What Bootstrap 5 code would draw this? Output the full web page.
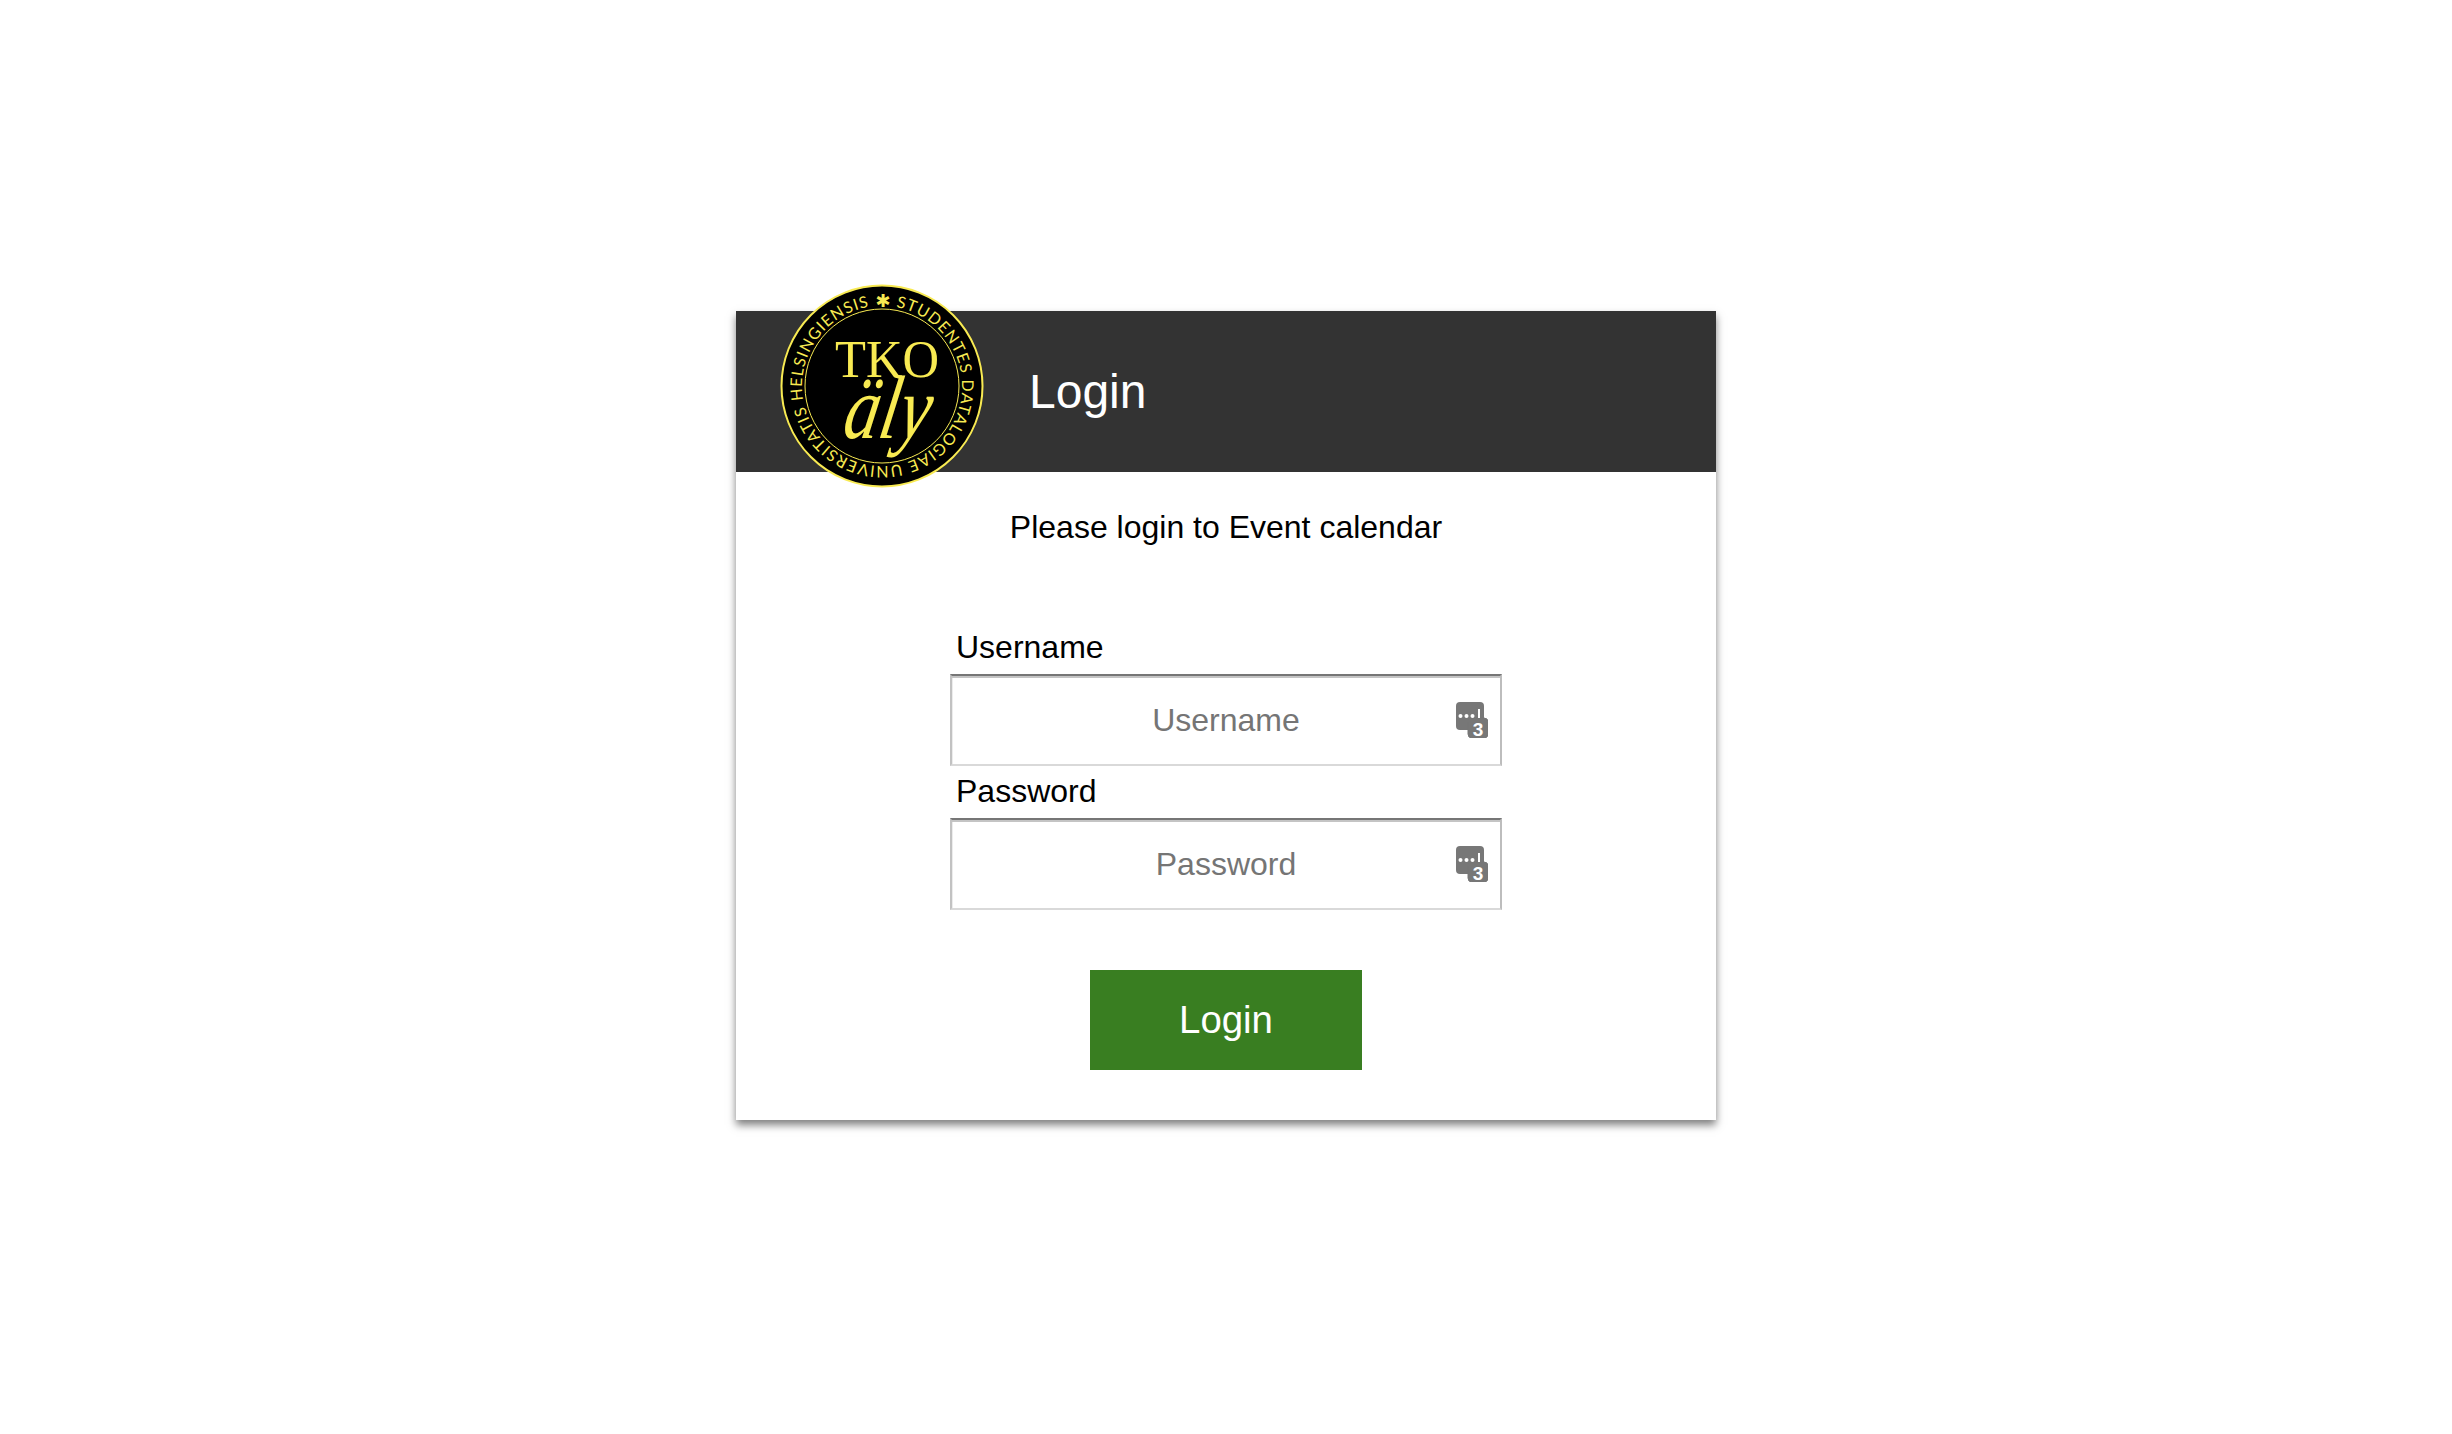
<!DOCTYPE html>
<html lang="en">
<head>
    <meta charset="UTF-8">
    <meta name="viewport" content="width=device-width, initial-scale=1.0">
    <title>Login</title>
    <link href="https://cdn.jsdelivr.net/npm/bootstrap@5.3.0/dist/css/bootstrap.min.css" rel="stylesheet">
    <style>
        body {
            font-family: "Liberation Sans", Arial, sans-serif;
            color: #000;
            background: #fff;
        }
        .login-page {
            padding-bottom: 3px;
        }
        .login-box {
            position: relative;
            width: 980px;
            height: 809px;
            background: #fff;
            box-shadow: 0 5px 8px rgba(0,0,0,0.5);
        }
        .login-head {
            height: 161px;
            padding-left: 293px;
            background: #333;
            color: #fff;
            font-size: 48px;
        }
        .login-logo {
            position: absolute;
            left: 44px;
            top: -27px;
            width: 204px;
            height: 204px;
        }
        .login-intro {
            margin: 36px 0 0;
            height: 38px;
            font-size: 32px;
            line-height: 38px;
        }
        .login-form {
            width: 552px;
            margin: 76px auto 0;
        }
        .login-label {
            display: block;
            margin: 0;
            padding-left: 6px;
            height: 52px;
            font-size: 32px;
            line-height: 50px;
        }
        .login-field {
            position: relative;
        }
        .login-field .form-control {
            height: 92px;
            padding: 0 60px;
            border-radius: 0;
            border-width: 2px;
            border-style: solid;
            border-color: #767676 #bdbdbd #d9d9d9 #c2c2c2;
            box-shadow: inset 0 2px 0 #c4c4c4, inset 1px 0 0 #ececec;
            font-size: 32px;
            text-align: center;
            color: #000;
        }
        .login-field .form-control::placeholder {
            color: #757575;
            opacity: 1;
        }
        .field-icon {
            position: absolute;
            right: 14px;
            top: 28px;
            width: 32px;
            height: 36px;
        }
        .login-btn {
            display: block;
            width: 272px;
            height: 100px;
            margin: 60px auto 0;
            padding: 0;
            border: 0;
            border-radius: 0;
            background: #397e21;
            color: #fff;
            font-size: 38.4px;
        }
        .login-btn:hover {
            background: #397e21;
            color: #fff;
        }
    </style>
</head>
<body>
    <div class="login-page d-flex align-items-center justify-content-center min-vh-100">
        <div class="login-box">
            <div class="login-head d-flex align-items-center">Login</div>
            <svg class="login-logo" viewBox="-102 -102 204 204" role="img" aria-label="TKO-äly">
                <defs>
                    <path id="ringPath" d="M 0 -80 A 80 80 0 1 1 -0.01 -80"></path>
                </defs>
                <circle r="100.5" fill="#000" stroke="#f8ea52" stroke-width="2"></circle>
                <circle r="77" fill="none" stroke="#f8ea52" stroke-width="1"></circle>
                <text font-family="Lato, sans-serif" font-size="16" fill="#f8ea52">
                    <textPath href="#ringPath" startOffset="14" textLength="475">STUDENTES DATALOGIAE UNIVERSITATIS HELSINGIENSIS</textPath>
                </text>
                <text x="1" y="-79" font-family="'DejaVu Sans', sans-serif" font-size="18" fill="#f8ea52" text-anchor="middle">✱</text>
                <text x="-47" y="-9" font-family="'Liberation Serif', serif" font-size="53" fill="#f8ea52" textLength="104" lengthAdjust="spacingAndGlyphs">TKO</text>
                <text transform="translate(-41 52) skewX(-10)" font-family="'Liberation Serif', serif" font-style="italic" font-size="90" fill="#f8ea52" textLength="86" lengthAdjust="spacingAndGlyphs">äly</text>
            </svg>
            <p class="login-intro text-center">Please login to Event calendar</p>
            <form class="login-form">
                <label class="login-label" for="username">Username</label>
                <div class="login-field">
                    <input type="text" class="form-control" id="username" placeholder="Username">
                    <svg class="field-icon" viewBox="0 0 32 36" aria-hidden="true">
                        <rect x="0" y="0" width="28" height="28" rx="4" fill="#777"></rect>
                        <rect x="12" y="16" width="20" height="20" rx="4" fill="#777" stroke="#777"></rect>
                        <circle cx="4.5" cy="14" r="2" fill="#fff"></circle>
                        <circle cx="10.5" cy="14" r="2" fill="#fff"></circle>
                        <circle cx="16.5" cy="14" r="2" fill="#fff"></circle>
                        <rect x="22" y="7" width="2" height="9" fill="#fff"></rect>
                        <text x="22" y="33.5" font-family="'Liberation Sans', sans-serif" font-weight="700" font-size="19" fill="#fff" text-anchor="middle">3</text>
                    </svg>
                </div>
                <label class="login-label" for="password">Password</label>
                <div class="login-field">
                    <input type="password" class="form-control" id="password" placeholder="Password">
                    <svg class="field-icon" viewBox="0 0 32 36" aria-hidden="true">
                        <rect x="0" y="0" width="28" height="28" rx="4" fill="#777"></rect>
                        <rect x="12" y="16" width="20" height="20" rx="4" fill="#777" stroke="#777"></rect>
                        <circle cx="4.5" cy="14" r="2" fill="#fff"></circle>
                        <circle cx="10.5" cy="14" r="2" fill="#fff"></circle>
                        <circle cx="16.5" cy="14" r="2" fill="#fff"></circle>
                        <rect x="22" y="7" width="2" height="9" fill="#fff"></rect>
                        <text x="22" y="33.5" font-family="'Liberation Sans', sans-serif" font-weight="700" font-size="19" fill="#fff" text-anchor="middle">3</text>
                    </svg>
                </div>
                <button type="submit" class="btn login-btn">Login</button>
            </form>
        </div>
    </div>

    <script src="https://cdn.jsdelivr.net/npm/bootstrap@5.3.0/dist/js/bootstrap.bundle.min.js"></script>
</body>
</html>
